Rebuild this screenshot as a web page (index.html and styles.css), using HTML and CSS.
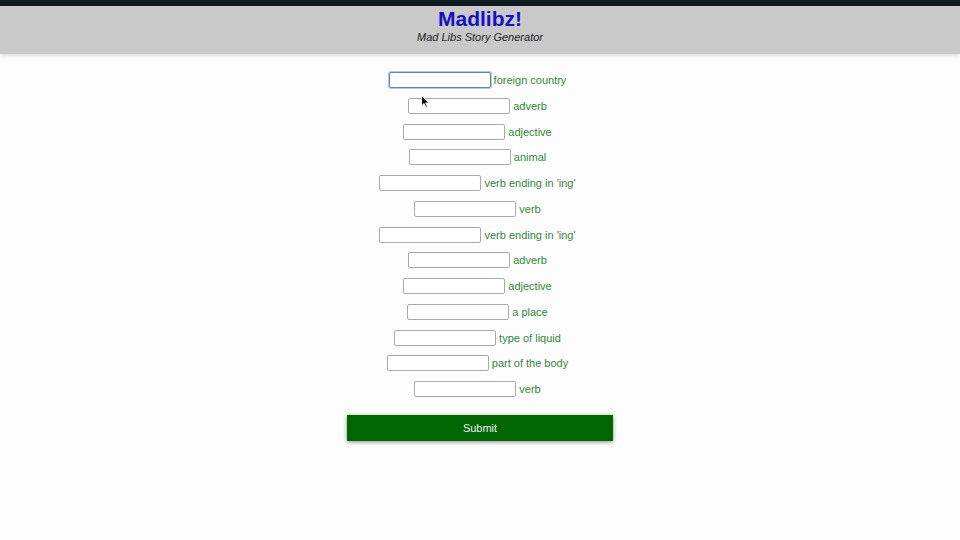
FILE: index.html
```html
<!DOCTYPE html>
<html>
<head>
<meta charset="utf-8">
<link rel="stylesheet" href="styles.css">
</head>
<body>
<div class="topbar"></div>
<header class="header">
  <h1 class="title">Madlibz!</h1>
  <p class="subtitle">Mad Libs Story Generator</p>
</header>
<main class="main">
  <form class="form">
    <div class="row"><input class="field focused" type="text"><span class="label">foreign country</span></div>
    <div class="row"><input class="field" type="text"><span class="label">adverb</span></div>
    <div class="row"><input class="field" type="text"><span class="label">adjective</span></div>
    <div class="row"><input class="field" type="text"><span class="label">animal</span></div>
    <div class="row"><input class="field" type="text"><span class="label">verb ending in 'ing'</span></div>
    <div class="row"><input class="field" type="text"><span class="label">verb</span></div>
    <div class="row"><input class="field" type="text"><span class="label">verb ending in 'ing'</span></div>
    <div class="row"><input class="field" type="text"><span class="label">adverb</span></div>
    <div class="row"><input class="field" type="text"><span class="label">adjective</span></div>
    <div class="row"><input class="field" type="text"><span class="label">a place</span></div>
    <div class="row"><input class="field" type="text"><span class="label">type of liquid</span></div>
    <div class="row"><input class="field" type="text"><span class="label">part of the body</span></div>
    <div class="row"><input class="field" type="text"><span class="label">verb</span></div>
    <button class="submit" type="button">Submit</button>
  </form>
</main>
<svg class="cursor" width="10" height="14" viewBox="0 0 10 14">
  <path d="M0.5 0.5 L0.5 11 L3 8.6 L4.8 12.6 L6.4 11.9 L4.7 8 L8 8 Z" fill="#111" stroke="#fff" stroke-width="1"/>
</svg>
</body>
</html>
```
FILE: styles.css
```css
html, body {
  margin: 0;
  padding: 0;
  background: #fdfdfd;
  font-family: "Liberation Sans", Arial, sans-serif;
  height: 540px;
  overflow: hidden;
}
.topbar {
  height: 6px;
  background: #101b20;
}
.header {
  height: 48px;
  background: #c9c9c9;
  box-shadow: 0 2px 3px rgba(0,0,0,0.12);
  text-align: center;
  position: relative;
}
.title {
  margin: 0;
  padding-top: 1px;
  font-size: 21px;
  line-height: 23px;
  font-weight: bold;
  color: #1212c4;
}
.subtitle {
  margin: 0;
  font-size: 11px;
  line-height: 14px;
  font-style: italic;
  color: #222;
}
.main {
  padding-top: 18px;
}
.form {
  display: flex;
  flex-direction: column;
  align-items: center;
}
.row {
  display: flex;
  align-items: center;
  height: 16px;
  margin: 0 5px 9.75px 0;
}
.field {
  box-sizing: border-box;
  width: 102px;
  height: 16px;
  margin: 0 3px 0 0;
  padding: 0 3px;
  border: 1px solid #a9a9a9;
  border-radius: 2px;
  background: #fff;
}
.field.focused {
  border: 1px solid #5b86c4;
  box-shadow: 0 0 0 1px rgba(91,134,196,0.45);
}
.label {
  font-size: 11px;
  color: #2f8a34;
  line-height: 14px;
}
.submit {
  margin-top: 8px;
  width: 266px;
  height: 26px;
  background: #006600;
  color: #f2f2f2;
  border: none;
  border-radius: 0;
  font-family: "Liberation Sans", Arial, sans-serif;
  font-size: 11px;
  box-shadow: 0 1px 4px rgba(0,0,0,0.45);
}
.cursor {
  position: absolute;
  left: 421px;
  top: 95px;
}
```
